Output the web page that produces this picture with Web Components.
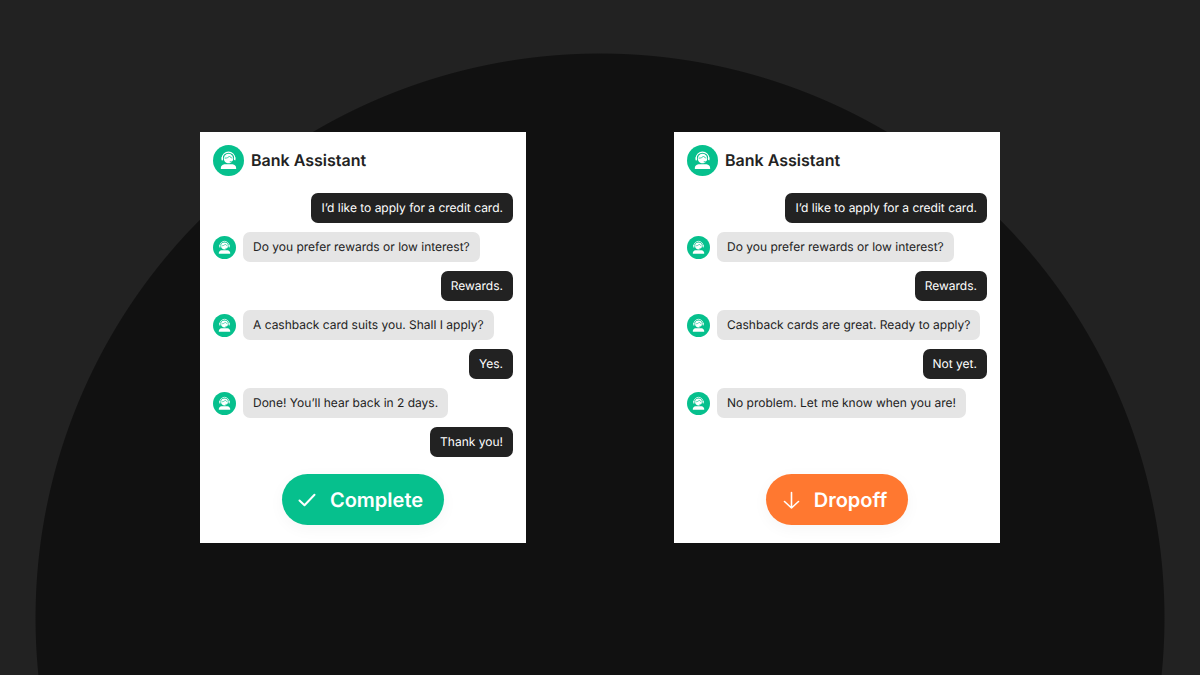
<!DOCTYPE html>
<html lang="en">
<head>
<meta charset="utf-8">
<meta name="viewport" content="width=device-width, initial-scale=1">
<title>Bank Assistant conversations</title>
<style>
  html, body { margin: 0; min-height: 100%; background: #222; }
  body { font-family: Inter, "Liberation Sans", sans-serif; color: #222; text-rendering: geometricPrecision; }
</style>
</head>
<body>
<chat-stage>
  <chat-card heading="Bank Assistant">
    <chat-message from="user">I’d like to apply for a credit card.</chat-message>
    <chat-message from="agent">Do you prefer rewards or low interest?</chat-message>
    <chat-message from="user">Rewards.</chat-message>
    <chat-message from="agent">A cashback card suits you. Shall I apply?</chat-message>
    <chat-message from="user">Yes.</chat-message>
    <chat-message from="agent">Done! You’ll hear back in 2 days.</chat-message>
    <chat-message from="user">Thank you!</chat-message>
    <status-pill slot="status" kind="complete">Complete</status-pill>
  </chat-card>
  <chat-card heading="Bank Assistant">
    <chat-message from="user">I’d like to apply for a credit card.</chat-message>
    <chat-message from="agent">Do you prefer rewards or low interest?</chat-message>
    <chat-message from="user">Rewards.</chat-message>
    <chat-message from="agent">Cashback cards are great. Ready to apply?</chat-message>
    <chat-message from="user">Not yet.</chat-message>
    <chat-message from="agent">No problem. Let me know when you are!</chat-message>
    <status-pill slot="status" kind="dropoff">Dropoff</status-pill>
  </chat-card>
</chat-stage>
<script>
class ChatStage extends HTMLElement {
  constructor() {
    super();
    this.attachShadow({ mode: 'open' }).innerHTML = `
      <style>
        :host {
          display: block; box-sizing: border-box; min-height: 100vh;
          padding: 132px 24px;
          background: radial-gradient(circle at 50% 51.5vw, #111 47vw, #222 calc(47vw + 1px));
        }
        main {
          display: grid; max-width: 800px; margin: 0 auto; gap: 32px;
          grid-template-columns: repeat(auto-fit, minmax(min(100%, 326px), 326px));
          justify-content: space-between;
        }
      </style>
      <main><slot></slot></main>`;
  }
}

class AgentAvatar extends HTMLElement {
  constructor() {
    super();
    this.attachShadow({ mode: 'open' }).innerHTML = `
      <style>
        :host { display: block; flex: none; width: var(--avatar-size, 23px); height: var(--avatar-size, 23px); }
        svg { display: block; width: 100%; height: 100%; }
      </style>
      <svg viewBox="0 0 30 30" aria-hidden="true">
        <circle cx="15" cy="15" r="15" fill="#06c08d"/>
        <path d="M7.600 23.200v-1c0-2 1.500-3.200 3.400-3.600h8c1.900.4 3.400 1.600 3.400 3.600v1z" fill="#fff"/>
        <path d="M8.900 13a6.100 6.100 0 0 1 12.200 0" fill="none" stroke="#fff" stroke-width="1"/>
        <rect x="8.200" y="11.600" width="1.500" height="3.400" rx=".7" fill="#fff"/>
        <rect x="20.300" y="11.600" width="1.500" height="3.400" rx=".7" fill="#fff"/>
        <path d="M10.500 13a4.500 4.500 0 0 1 9 0c0 2.700-2 4.700-4.500 4.700s-4.500-2-4.500-4.700z" fill="#fff"/>
        <path d="M11.300 12.700c2.200.1 3.900-.7 4.700-2 .6 1 1.300 1.600 2.700 1.900" fill="none" stroke="#06c08d" stroke-width=".8"/>
        <path d="M20.900 14.500c-.3 1.500-1.700 1.900-4.700 1.700" fill="none" stroke="#06c08d" stroke-width=".8"/>
      </svg>`;
  }
}

class ChatMessage extends HTMLElement {
  connectedCallback() {
    if (this.shadowRoot) return;
    const agent = this.getAttribute('from') === 'agent';
    this.attachShadow({ mode: 'open' }).innerHTML = `
      <style>
        :host { display: flex; align-items: center; gap: 7px; }
        :host([from="user"]) { justify-content: flex-end; }
        p {
          margin: 0; padding: 7px 10px; border-radius: 7px;
          background: #222; color: #fff; font-size: 12px; line-height: 16px;
        }
        :host([from="agent"]) p { background: #e5e5e5; color: #222; }
      </style>
      ${agent ? '<agent-avatar></agent-avatar>' : ''}<p><slot></slot></p>`;
  }
}

class StatusPill extends HTMLElement {
  connectedCallback() {
    if (this.shadowRoot) return;
    const icon = this.getAttribute('kind') === 'complete'
      ? '<path stroke-width="2" d="M1.500 9.500 6.500 14.200 16.500 3.800"/>'
      : '<path stroke-width="1.600" d="M9.500 1.500V17M2.500 10.500 9.500 17 16.500 10.500"/>';
    this.attachShadow({ mode: 'open' }).innerHTML = `
      <style>
        :host {
          display: flex; align-items: center; gap: 14px;
          padding: 12px 21px 11px 16px; border-radius: 26px;
          background: #06c08d; color: #fff; font-size: 20px; line-height: 28px; font-weight: 600;
          box-shadow: 0 4px 16px rgba(0, 0, 0, .04);
        }
        :host([kind="dropoff"]) { background: #ff7830; }
        svg { flex: none; width: 18px; height: 18px; }
      </style>
      <svg viewBox="0 0 18 18" fill="none" stroke="#fff" stroke-linecap="round" stroke-linejoin="round" aria-hidden="true">${icon}</svg>
      <span><slot></slot></span>`;
  }
}

class ChatCard extends HTMLElement {
  connectedCallback() {
    if (this.shadowRoot) return;
    this.attachShadow({ mode: 'open' }).innerHTML = `
      <style>
        :host {
          display: flex; flex-direction: column; box-sizing: border-box;
          padding: 13px 13px 18px; background: #fff;
        }
        header { display: flex; align-items: center; gap: 7px; --avatar-size: 31px; }
        h2 { margin: 0; font-size: 16px; line-height: 31px; font-weight: 600; }
        .messages { display: flex; flex-direction: column; gap: 9px; margin: 17px 0; }
        footer { display: flex; justify-content: center; margin-top: auto; }
      </style>
      <header><agent-avatar></agent-avatar><h2></h2></header>
      <div class="messages"><slot></slot></div>
      <footer><slot name="status"></slot></footer>`;
    this.shadowRoot.querySelector('h2').textContent = this.getAttribute('heading');
  }
}

customElements.define('agent-avatar', AgentAvatar);
customElements.define('chat-message', ChatMessage);
customElements.define('status-pill', StatusPill);
customElements.define('chat-card', ChatCard);
customElements.define('chat-stage', ChatStage);
</script>
</body>
</html>
